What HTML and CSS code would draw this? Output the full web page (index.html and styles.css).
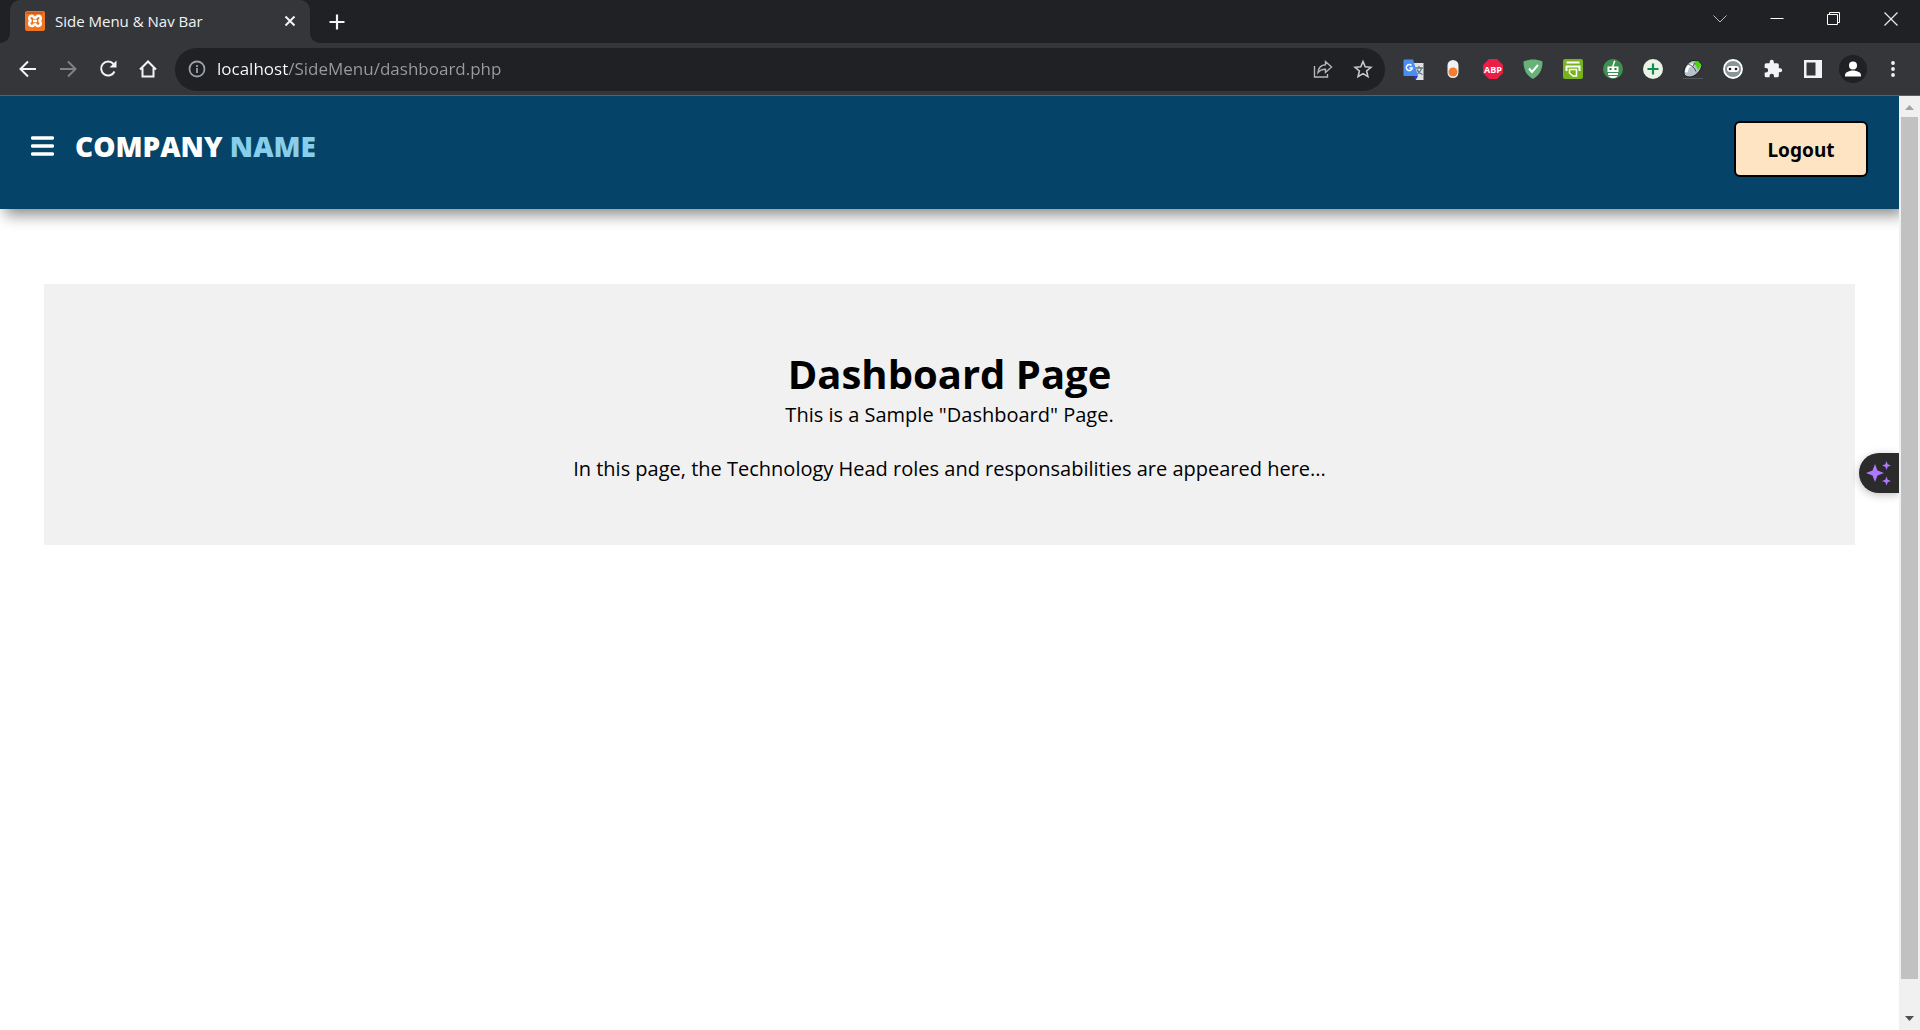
FILE: index.html
```html
<!DOCTYPE html>
<html lang="en">
<head>
<meta charset="utf-8">
<title>Side Menu &amp; Nav Bar</title>
<link rel="stylesheet" href="styles.css">
</head>
<body>
<div class="browser">
  <header class="tabstrip">
    <div class="tab">
      <svg class="tab-icon" viewBox="0 0 20 20" width="20" height="20" aria-hidden="true"><rect width="20" height="20" rx="2" fill="#f0741f"/><path d="M1 3V2a1 1 0 0 1 1-1h16v2z" fill="#c85f28"/><path d="M7 4.800a2.500 2.500 0 1 0-.5 5 2.500 2.500 0 1 0 .7 5.200c1.300 0 1.800-1.800 2.800-1.800s1.500 1.800 2.800 1.800a2.500 2.500 0 1 0 .7-5.200 2.500 2.500 0 1 0-.5-5c-1.500 0-1.800 2.200-3 2.200s-1.500-2.200-3-2.200zM8 10h4" fill="none" stroke="#fff" stroke-width="2.600"/></svg>
      <span class="tab-title">Side Menu &amp; Nav Bar</span>
      <button class="plain" aria-label="Close tab"><svg viewBox="0 0 12 12" width="12" height="12"><path d="M1.500 1.500l9 9m0-9l-9 9" stroke="#f1f3f4" stroke-width="2"/></svg></button>
    </div>
    <button class="plain new-tab" aria-label="New tab"><svg viewBox="0 0 16 16" width="16" height="16"><path d="M8 .5v15M.5 8h15" stroke="#f1f3f4" stroke-width="2.200"/></svg></button>
    <div class="window-controls">
      <button class="plain" aria-label="Search tabs"><svg viewBox="0 0 14 14" width="14" height="14"><path d="M.5 3.500L7 10l6.500-6.500" fill="none" stroke="#bbb"/></svg></button>
      <button class="plain" aria-label="Minimize"><svg viewBox="0 0 14 14" width="14" height="14"><path d="M.5 6.500h13" stroke="#fff"/></svg></button>
      <button class="plain" aria-label="Restore"><svg viewBox="0 0 14 14" width="14" height="14"><path d="M.5 2.500h10v10H.5zM2.500 2.500v-2h10v10h-2" fill="none" stroke="#fff"/></svg></button>
      <button class="plain" aria-label="Close"><svg viewBox="0 0 14 14" width="14" height="14"><path d="M.5.5l13 13m0-13l-13 13" stroke="#e6e6e6" stroke-width="1.300"/></svg></button>
    </div>
  </header>

  <div class="toolbar">
    <div class="tools">
      <button class="plain tool" aria-label="Back"><svg viewBox="0 0 20 20" width="20" height="20"><path d="M18 10H3M10 2.500L2.500 10l7.500 7.500" fill="none" stroke="#f1f3f4" stroke-width="2"/></svg></button>
      <button class="plain tool" aria-label="Forward"><svg viewBox="0 0 20 20" width="20" height="20"><path d="M2 10h15M10 2.500l7.500 7.500-7.500 7.500" fill="none" stroke="#818286" stroke-width="2"/></svg></button>
      <button class="plain tool" aria-label="Reload"><svg viewBox="0 0 20 20" width="20" height="20"><path d="M16.500 12.500A7 7 0 1 1 15.500 5" fill="none" stroke="#f1f3f4" stroke-width="2"/><path d="M18.500 1.500v7h-7z" fill="#f1f3f4"/></svg></button>
      <button class="plain tool" aria-label="Home"><svg viewBox="0 0 20 20" width="20" height="20"><path d="M2 10.500l8-8 8 8M4.500 9v8.500h11V9" fill="none" stroke="#f1f3f4" stroke-width="2"/></svg></button>
    </div>
    <form class="address">
      <svg viewBox="0 0 18 18" width="18" height="18" aria-hidden="true"><circle cx="9" cy="9" r="7.500" fill="none" stroke="#9aa0a6" stroke-width="1.800"/><path d="M9 8v5M9 5v2" stroke="#9aa0a6" stroke-width="1.800"/></svg>
      <input class="url" type="text" aria-label="Address" value="localhost/SideMenu/dashboard.php" spellcheck="false">
      <button type="button" class="plain tool" aria-label="Share"><svg viewBox="0 0 20 20" width="20" height="20"><path d="M1.500 7v11h13v-3" fill="none" stroke="#b4b7ba" stroke-width="1.400"/><path d="M5 13.500C5.500 8.500 8 6 12.500 5.800V2.500L18.500 8l-6 5.500v-3.300C9 10 7 11 5 13.500z" fill="none" stroke="#b4b7ba" stroke-width="1.400"/></svg></button>
      <button type="button" class="plain tool" aria-label="Bookmark"><svg viewBox="0 0 20 20" width="20" height="20"><path d="M10 2.500l2.200 5.300 5.700.5-4.300 3.700 1.300 5.600L10 14.600l-4.900 3 1.300-5.600L2.100 8.300l5.700-.5z" fill="none" stroke="#c8cacc" stroke-width="1.600"/></svg></button>
    </form>
    <div class="tools">
      <button class="plain tool" aria-label="Translate"><svg viewBox="0 0 21 21" width="21" height="21"><path d="M9 4h11.500v17H13z" fill="#dfe1e3"/><path d="M12 9h8M16 7v2M18.500 9c-.5 3-2.500 5-5 6.500M14 10.500c1 2.500 3 4 5.500 5" fill="none" stroke="#5d7780" stroke-width="1.300"/><path d="M1.500.5h8.500l5 16.500H1.500a1 1 0 0 1-1-1v-14.500a1 1 0 0 1 1-1z" fill="#4c8df5"/><path d="M10.500 17H15l-2 3.500z" fill="#2239c8"/><path d="M8.500 6.500A3 3 0 1 0 9.300 9H6.500" fill="none" stroke="#fff" stroke-width="1.500"/></svg></button>
      <button class="plain tool" aria-label="Toggle"><svg viewBox="0 0 20 20" width="20" height="20"><rect x="4.500" y="1" width="11" height="18" rx="5.500" fill="#f1f1f1"/><circle cx="10" cy="13" r="4.500" fill="#f47b30"/></svg></button>
      <button class="plain tool" aria-label="Adblock Plus"><svg viewBox="0 0 20 20" width="20" height="20"><path d="M6 0h8l6 6v8l-6 6H6l-6-6V6z" fill="#ed1e45"/><text class="abp" x="10" y="13.500" text-anchor="middle" fill="#fff">ABP</text></svg></button>
      <button class="plain tool" aria-label="Ad guard"><svg viewBox="0 0 20 20" width="20" height="20"><path d="M10 .5c3 0 6 .6 9.500 2 0 9-3.500 14-9.500 17.500C4 16.500.5 11.500.5 2.500 4 1.100 7 .5 10 .5z" fill="#67b279"/><path d="M6 9.500l3 3.500 6-7" fill="none" stroke="#fff" stroke-width="2"/></svg></button>
      <button class="plain tool" aria-label="Print"><svg viewBox="0 0 20 20" width="20" height="20"><rect width="20" height="20" rx="2" fill="#77b31c"/><path d="M4.500 4.500v-1h11v1M3.500 12V7.500h13V12" fill="none" stroke="#fff" stroke-width="2"/><path d="M6.500 10.500h7V17H10l-3.500-3z" fill="#77b31c" stroke="#fff" stroke-width="1.500"/></svg></button>
      <button class="plain tool" aria-label="Robot helper"><svg viewBox="0 0 20 20" width="20" height="20"><circle cx="10" cy="10" r="10" fill="#419052"/><path d="M4.500 7.500h4.500l2-6 1.500.5-2 5.500h5V13h-11zM5 14h10v2H5zM5 17h10l-3 2H8z" fill="#fff"/><path d="M6.500 9h2v2h-2zm5 0h2v2h-2z" fill="#2d7540"/></svg></button>
      <button class="plain tool" aria-label="Add"><svg viewBox="0 0 20 20" width="20" height="20"><circle cx="10" cy="10" r="10" fill="#e9f3e6"/><path d="M10 4.500v11M4.500 10h11" stroke="#168a55" stroke-width="2.200"/></svg></button>
      <button class="plain tool" aria-label="Mouse gestures"><svg viewBox="0 0 20 20" width="20" height="20"><path d="M0 19.500h20" stroke="#55575b"/><path d="M1 14C.5 9 5 2.500 10 1.500l5.500.5 3.500 4C18 12 12 18 6.500 18 3 18 1.300 16.500 1 14z" fill="#b9c2ca" stroke="#15181c"/><path d="M11 3.500l4.500-1 3 3.500-3.500 5-1.500-3z" fill="#49d60c"/><path d="M3.500 12C4 8.500 6.500 6 9 6" fill="none" stroke="#fff" stroke-width="3" stroke-linecap="round"/><path d="M5.500 5.500c3 .5 6 3 7.500 7M10 7l2-3" fill="none" stroke="#444b52"/></svg></button>
      <button class="plain tool" aria-label="Private mode"><svg viewBox="0 0 20 20" width="20" height="20"><circle cx="10" cy="10" r="9" fill="#879599" stroke="#fff" stroke-width="1.800"/><rect x="4" y="7" width="12" height="6" rx="3" fill="#fff"/><circle cx="7" cy="10" r="1.300" fill="#15181c"/><circle cx="13" cy="10" r="1.300" fill="#15181c"/></svg></button>
      <button class="plain tool" aria-label="Extensions"><svg viewBox="0 0 24 24" width="20" height="20"><path d="M20.500 11H19V7a2 2 0 0 0-2-2h-4V3.500a2.500 2.500 0 0 0-5 0V5H4a2 2 0 0 0-2 2v3.800h1.500a2.700 2.700 0 0 1 0 5.400H2V20a2 2 0 0 0 2 2h3.800v-1.500a2.700 2.700 0 0 1 5.400 0V22H17a2 2 0 0 0 2-2v-4h1.500a2.500 2.500 0 0 0 0-5z" fill="#f1f3f4"/></svg></button>
      <button class="plain tool" aria-label="Side panel"><svg viewBox="0 0 18 18" width="18" height="18"><path d="M0 0h18v18H0zM2.500 2.500v13h9v-13z" fill="#f1f3f4" fill-rule="evenodd"/></svg></button>
      <button class="plain tool" aria-label="Profile"><svg viewBox="0 0 28 28" width="28" height="28"><circle cx="14" cy="14" r="14" fill="#202124"/><circle cx="14" cy="10.500" r="4" fill="#fff"/><path d="M6 21.500v-1.500c0-3 5-4.500 8-4.500s8 1.500 8 4.500v1.500z" fill="#fff"/></svg></button>
      <button class="plain tool" aria-label="Menu"><svg viewBox="0 0 20 20" width="20" height="20"><g fill="#f1f3f4"><circle cx="10" cy="4" r="1.900"/><circle cx="10" cy="10" r="1.900"/><circle cx="10" cy="16" r="1.900"/></g></svg></button>
    </div>
  </div>

  <div class="viewport">
    <div class="page">
      <nav class="navbar">
        <div class="brand">
          <button class="plain" aria-label="Open menu"><svg viewBox="0 0 23 20" width="23" height="20"><path d="M1.500 2h20M1.500 10h20M1.500 18h20" stroke="#fff" stroke-width="3.500" stroke-linecap="round"/></svg></button>
          <a class="logo" href="#">COMPANY <span class="logo-accent">NAME</span></a>
        </div>
        <button class="logout">Logout</button>
      </nav>
      <main class="panel">
        <h1>Dashboard Page</h1>
        <p>This is a Sample "Dashboard" Page.<br><br>In this page, the Technology Head roles and responsabilities are appeared here...</p>
      </main>
      <button class="plain assistant" aria-label="Assistant"><svg viewBox="0 0 26 25" width="26" height="25"><g fill="#b077ff"><path d="M9 3l2.500 6.500L18 12l-6.500 2.500L9 21l-2.500-6.500L0 12l6.500-2.500z"/><path d="M20.500 0l1.200 3.300L25 4.500l-3.300 1.200L20.500 9l-1.200-3.300L16 4.500l3.300-1.200zM20.500 15.500l1.200 3.300L25 20l-3.300 1.200-1.200 3.300-1.200-3.300L16 20l3.300-1.200z"/></g></svg></button>
    </div>
    <div class="scrollbar" aria-hidden="true">
      <svg viewBox="0 0 21 21" width="21" height="21"><path d="M6 14h9l-4.500-5z" fill="#a3a3a3"/></svg>
      <div class="track"><div class="thumb"></div></div>
      <svg viewBox="0 0 21 21" width="21" height="21"><path d="M6 7h9l-4.500 5z" fill="#505050"/></svg>
    </div>
  </div>
</div>
</body>
</html>
```
FILE: styles.css
```css
* { box-sizing: border-box; }

body {
  margin: 0;
  font-family: "Open Sans", sans-serif;
  background: #fff;
  color: #000;
}

.browser {
  display: flex;
  flex-direction: column;
  min-height: 100vh;
}

.plain {
  display: flex;
  align-items: center;
  justify-content: center;
  padding: 0;
  border: 0;
  background: none;
}

/* Tab strip */
.tabstrip {
  display: flex;
  height: 43px;
  padding: 0 1px 0 10px;
  background: #202124;
}

.tab {
  position: relative;
  display: flex;
  align-items: center;
  width: 300px;
  padding: 0 14px 1px 15px;
  gap: 10px;
  border-radius: 10px 10px 0 0;
  background: #35363a;
}

.tab::before,
.tab::after {
  content: "";
  position: absolute;
  bottom: 0;
  width: 10px;
  height: 10px;
}

.tab::before {
  right: 100%;
  background: radial-gradient(circle at 0 0, transparent 10px, #35363a 10px);
}

.tab::after {
  left: 100%;
  background: radial-gradient(circle at 100% 0, transparent 10px, #35363a 10px);
}

.tab-title {
  flex: 1;
  font-size: 15px;
  line-height: 20px;
  color: #f1f3f4;
}

.new-tab { width: 54px; }

.window-controls {
  display: flex;
  margin-left: auto;
}

.window-controls .plain {
  width: 57px;
  height: 37px;
}

/* Toolbar */
.toolbar {
  display: flex;
  align-items: center;
  height: 53px;
  padding: 0 7px 0 8px;
  border-bottom: 1px solid #5f6063;
  background: #35363a;
}

.tools {
  display: flex;
  align-items: center;
}

.tool {
  width: 40px;
  height: 40px;
}

.abp { font: bold 9px "Open Sans", sans-serif; }

.address {
  display: flex;
  align-items: center;
  flex: 1;
  height: 43px;
  margin: 0 8px 0 7px;
  padding: 0 2px 0 13px;
  border-radius: 22px;
  background: #202124;
}

/* The host part of the address is bright, the path is dimmed */
.url {
  flex: 1;
  min-width: 0;
  margin-left: 11px;
  padding: 0;
  border: 0;
  outline: 0;
  font-family: "Open Sans", sans-serif;
  font-size: 17px;
  line-height: 24px;
  background: linear-gradient(90deg, #fff 71px, #9a9ca0 71px);
  -webkit-background-clip: text;
  background-clip: text;
  color: transparent;
}

/* Web page */
.viewport {
  display: flex;
  flex: 1;
}

.page {
  position: relative;
  flex: 1;
  overflow: hidden;
}

.navbar {
  display: flex;
  align-items: flex-start;
  justify-content: space-between;
  min-height: 113px;
  padding: 25px 31px;
  background: #054468;
  box-shadow: 5px 6px 14px rgba(0, 0, 0, 0.45);
}

.brand {
  display: flex;
  align-items: center;
  gap: 21px;
  height: 50px;
}

.logo {
  font-size: 28px;
  font-weight: 800;
  color: #fff;
  text-decoration: none;
}

.logo-accent { color: #87ceeb; }

.logout {
  width: 134px;
  height: 56px;
  padding: 2px 0 0;
  border: 2px solid #000;
  border-radius: 6px;
  background: #ffe4c4;
  color: #000;
  font-family: "Noto Sans", sans-serif;
  font-size: 19px;
  font-weight: 700;
}

.panel {
  margin: 75px 44px 0;
  padding: 63px 24px;
  background: #f1f1f1;
  text-align: center;
}

.panel h1 {
  margin: 0;
  font-size: 40px;
  line-height: 54px;
  font-weight: 700;
}

.panel p {
  margin: 0;
  font-size: 20px;
  line-height: 27px;
}

.assistant {
  position: absolute;
  top: 357px;
  right: 0;
  width: 40px;
  height: 40px;
  border-radius: 20px 0 0 20px;
  background: #2b2b2b;
  box-shadow: 0 2px 8px rgba(0, 0, 0, 0.25);
}

/* Scroll bar */
.scrollbar {
  display: flex;
  flex-direction: column;
  width: 21px;
  background: #f0f0f0;
}

.track {
  display: flex;
  flex: 1;
  padding: 0 2px 30px;
}

.thumb {
  flex: 1;
  background: #c1c1c1;
}
```
